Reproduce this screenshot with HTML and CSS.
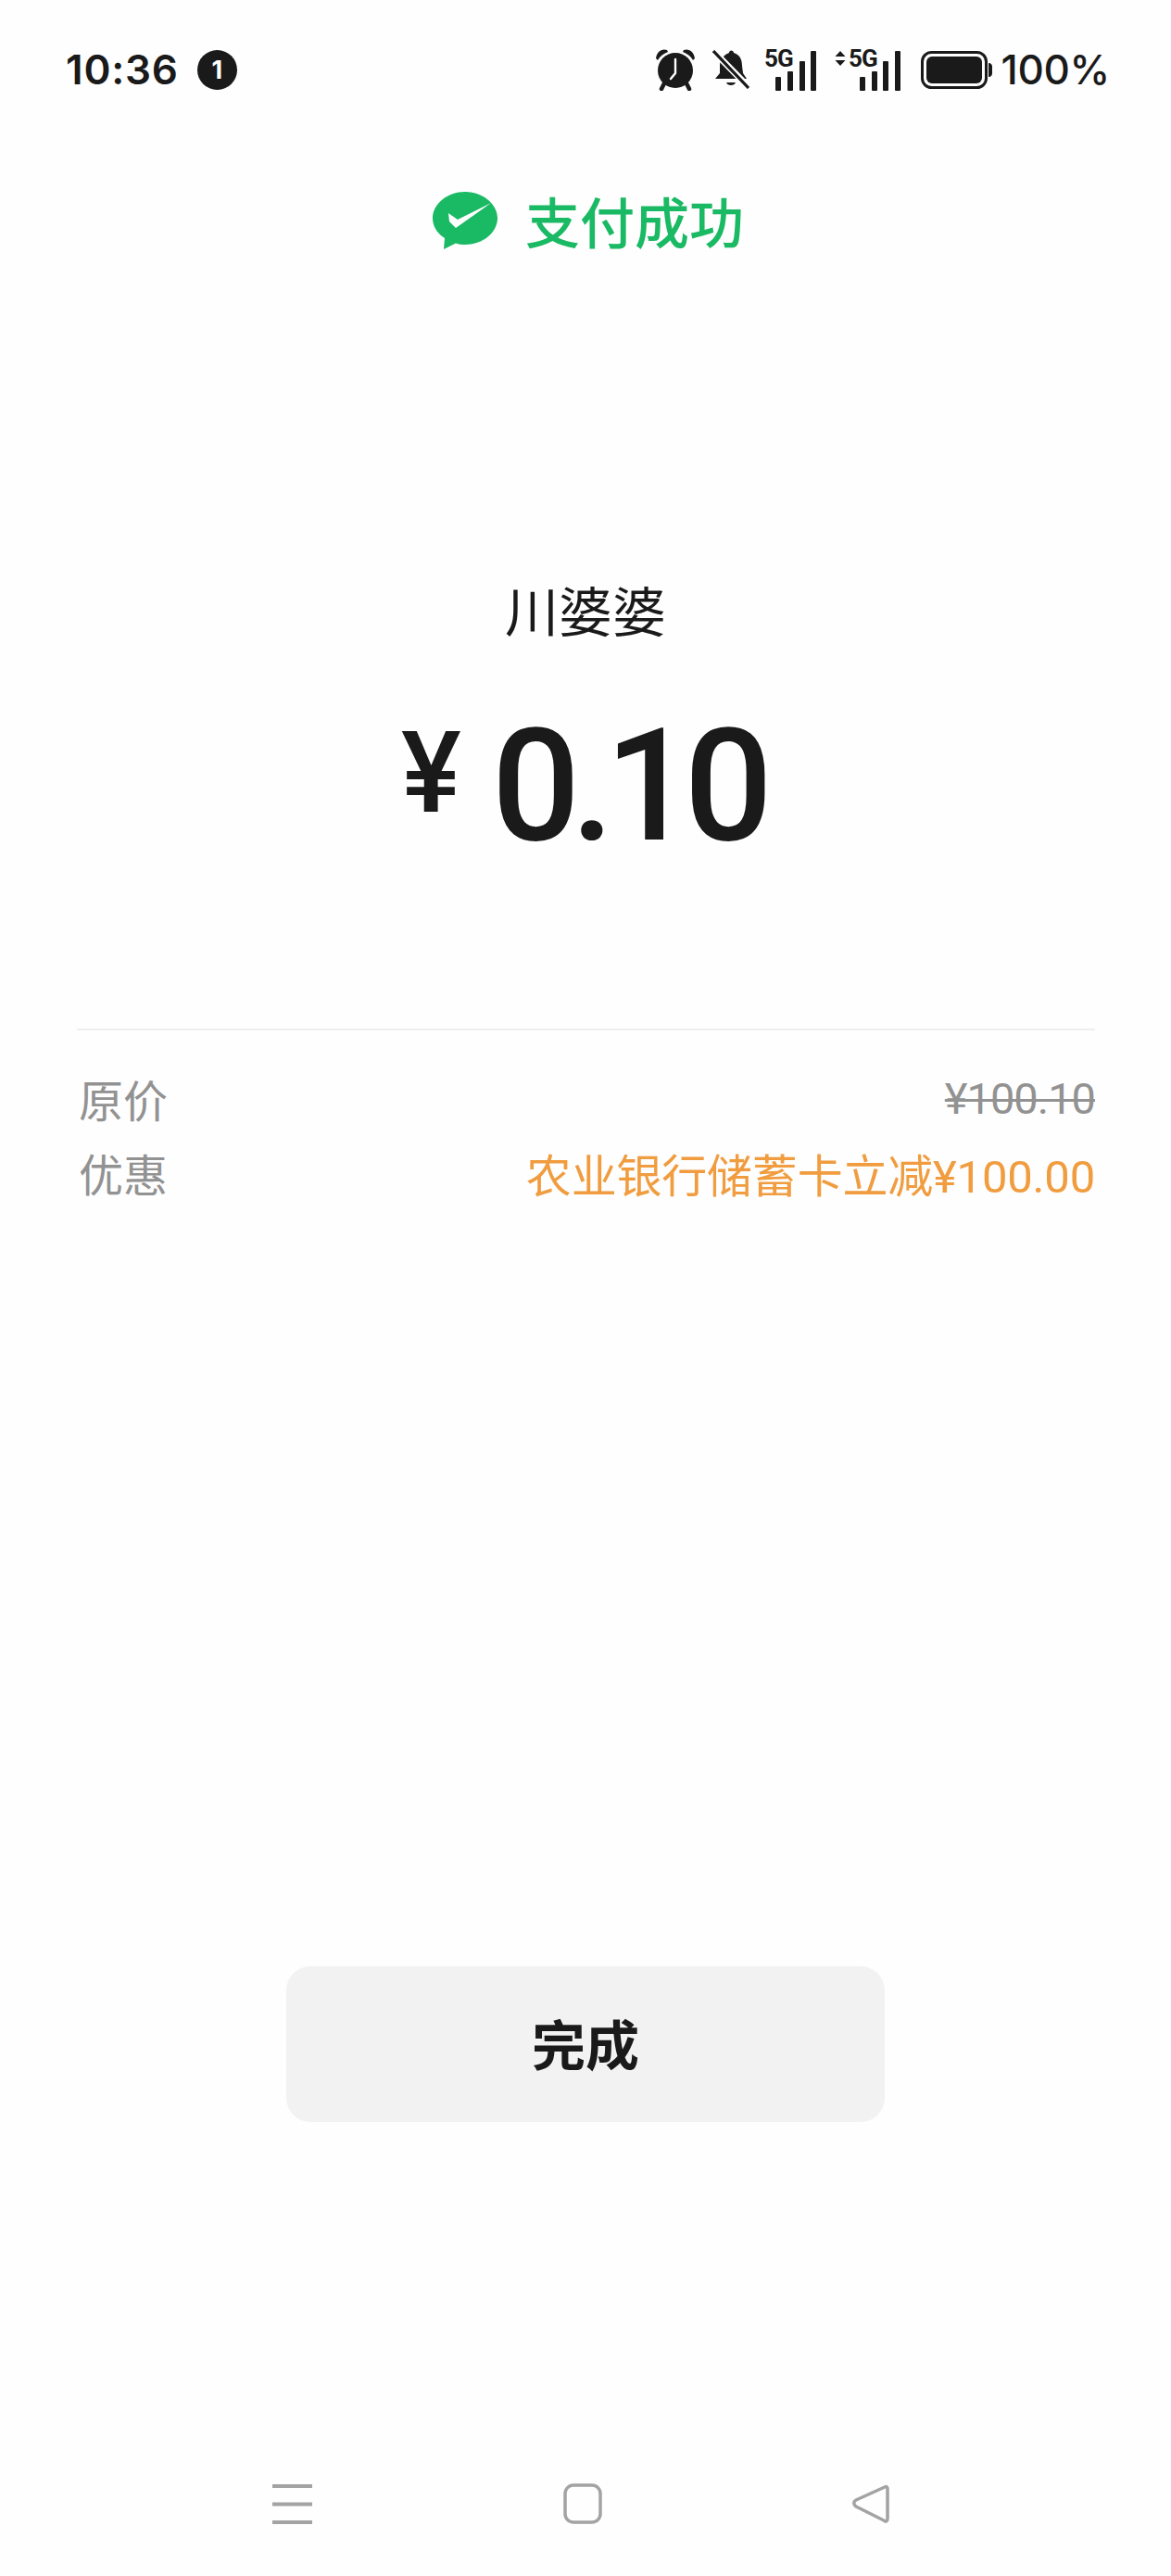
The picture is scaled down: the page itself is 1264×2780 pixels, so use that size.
FILE: index.html
```html
<!DOCTYPE html>
<html lang="zh-CN">
<head>
<meta charset="utf-8">
<title>支付成功</title>
<link rel="stylesheet" href="styles.css">
</head>
<body>
<div class="page">
  <header class="status">
    <div class="status-left">
      <span class="time">10:36</span>
      <span class="badge">1</span>
    </div>
    <div class="status-right">
      <svg class="ic-alarm" viewBox="0 0 44 46">
        <path d="M1 11 C2 4 7 0 13 2 L14 4 C9 6 5 9 3 13 Z M43 11 C42 4 37 0 31 2 L30 4 C35 6 39 9 41 13 Z" fill="#1a1a1a"/>
        <circle cx="22" cy="24" r="19" fill="#1a1a1a"/>
        <path d="M10 38 L7 44 M34 38 L37 44" stroke="#1a1a1a" stroke-width="4.500" stroke-linecap="round"/>
        <path d="M22 12 V27 L17 33" fill="none" stroke="#fff" stroke-width="2.400" stroke-linecap="round" stroke-linejoin="round"/>
      </svg>
      <svg class="ic-bell" viewBox="0 0 40 42">
        <path d="M18 3 a2.500 2.500 0 0 1 5 0 C30 5 32 11 32 17 L33 25 L37 31 H3 L8 25 V17 C8 11 12 5 18 3 Z" fill="#1a1a1a"/>
        <path d="M15 35 H25 C24 39 16 39 15 35 Z" fill="#1a1a1a"/>
        <path d="M-1 -1 L41 42" stroke="#fff" stroke-width="7"/>
        <path d="M1 1 L39 41" stroke="#1a1a1a" stroke-width="3.200"/>
      </svg>
      <svg class="ic-sig" viewBox="0 0 55 45">
        <text x="-1" y="19" class="g5">5G</text>
        <rect x="11" y="30" width="6" height="15" rx="1" fill="#1a1a1a"/>
        <rect x="24" y="24" width="6" height="21" rx="1" fill="#1a1a1a"/>
        <rect x="37" y="13" width="6" height="32" rx="1" fill="#1a1a1a"/>
        <rect x="49" y="2" width="6" height="43" rx="1" fill="#1a1a1a"/>
      </svg>
      <svg class="ic-sig2" viewBox="0 0 71 45">
        <path d="M6 2 L11.500 8 H0.500 Z M6 18 L11.500 12 H0.500 Z" fill="#1a1a1a"/>
        <text x="15" y="19" class="g5">5G</text>
        <rect x="27" y="30" width="6" height="15" rx="1" fill="#1a1a1a"/>
        <rect x="40" y="24" width="6" height="21" rx="1" fill="#1a1a1a"/>
        <rect x="52" y="13" width="6" height="32" rx="1" fill="#1a1a1a"/>
        <rect x="65" y="2" width="6" height="43" rx="1" fill="#1a1a1a"/>
      </svg>
      <svg class="ic-batt" viewBox="0 0 77 41">
        <rect x="1.500" y="1.500" width="69" height="38" rx="10" fill="none" stroke="#1a1a1a" stroke-width="3"/>
        <rect x="6" y="6" width="60" height="29" rx="6" fill="#1a1a1a"/>
        <path d="M73 13 C76 13 77 15 77 17 V24 C77 26 76 28 73 28 Z" fill="#1a1a1a"/>
      </svg>
      <span class="pct">100%</span>
    </div>
  </header>

  <div class="result">
    <svg class="wx" viewBox="0 0 70 62">
      <path d="M35 0 C54 0 70 13 70 28.500 C70 44 54 57 35 57 C31 57 28 56.500 25 55.500 L12 62 L13 50 C5 45 0 37 0 28.500 C0 13 16 0 35 0 Z" fill="#1ab963"/>
      <path d="M17 23 L27 30 L63 12 L25 39 L18 32 Z" fill="#fff"/>
    </svg>
    <span class="result-text">支付成功</span>
  </div>

  <div class="merchant">川婆婆</div>

  <div class="amount">
    <span class="cny">¥</span>
    <span class="num">0.10</span>
  </div>

  <section class="details">
    <div class="row">
      <span class="label">原价</span>
      <span class="strike">¥100.10</span>
    </div>
    <div class="row">
      <span class="label">优惠</span>
      <span class="promo">农业银行储蓄卡立减¥100.00</span>
    </div>
  </section>

  <div class="btn">完成</div>

  <nav class="nav">
    <svg class="nav-ic" viewBox="0 0 44 44">
      <path d="M-3 3 H40 M-3 22.500 H40 M-3 42 H40" stroke="#a3a3a3" stroke-width="4"/>
    </svg>
    <svg class="nav-ic" viewBox="0 0 44 44">
      <rect x="3" y="2" width="38" height="40" rx="9" fill="none" stroke="#a3a3a3" stroke-width="3.500"/>
    </svg>
    <svg class="nav-ic" viewBox="0 0 44 44">
      <path d="M38 4 C40 3 41 4 41 6 V38 C41 41 39 42 37 40 L7 25 C4 23 4 20 7 18 Z" fill="none" stroke="#a3a3a3" stroke-width="3.500" stroke-linejoin="round"/>
    </svg>
  </nav>
</div>
</body>
</html>
```

FILE: styles.css
```css
* { box-sizing: border-box; }
html, body { margin: 0; padding: 0; background: #fff; }
body { font-family: "Noto Sans CJK SC", "Noto Sans", sans-serif; color: #1a1a1a; }
.page { width: 1264px; height: 2780px; display: flex; flex-direction: column; overflow: hidden; background: #fefefe; }

.status { height: 150px; padding: 0 66px 0 71px; display: flex; align-items: center; justify-content: space-between; flex: none; }
.status-left { display: flex; align-items: center; gap: 20px; }
.status-right { display: flex; align-items: center; }
.time, .pct { font-family: Inter, "Liberation Sans", sans-serif; font-size: 44px; font-weight: 600; line-height: 50px; color: #1a1a1a; }
.time { letter-spacing: 0.8px; }
.pct { font-weight: 500; letter-spacing: -0.3px; }
.badge { width: 43px; height: 43px; border-radius: 50%; background: #1a1a1a; color: #fff; font-family: Inter, sans-serif; font-size: 27px; font-weight: 700; display: flex; align-items: center; justify-content: center; }
.ic-alarm { width: 44px; height: 46px; }
.ic-bell { width: 40px; height: 42px; margin-left: 18px; }
.ic-sig { width: 55px; height: 45px; margin-left: 17px; overflow: visible; }
.ic-sig2 { width: 71px; height: 45px; margin-left: 20px; overflow: visible; }
.ic-batt { width: 77px; height: 41px; margin-left: 22px; }
.pct { margin-left: 9px; }
.g5 { font-family: Roboto, sans-serif; font-size: 26px; font-weight: 700; fill: #1a1a1a; letter-spacing: -1px; }

.result { display: flex; align-items: center; justify-content: center; gap: 30px; margin-top: 55px; padding-left: 6px; height: 66px; flex: none; }
.wx { width: 70px; height: 62px; }
.result-text { font-size: 59px; line-height: 66px; color: #1ab963; font-weight: 500; }

.merchant { margin-top: 351px; text-align: center; font-size: 58px; line-height: 70px; color: #1a1a1a; flex: none; }

.amount { margin-top: 72px; padding-right: 7px; display: flex; justify-content: center; align-items: flex-start; height: 173px; flex: none; }
.cny { font-family: Roboto, sans-serif; font-size: 122px; font-weight: 500; line-height: 130px; margin-top: 6px; }
.num { font-family: Roboto, sans-serif; font-size: 168px; font-weight: 500; line-height: 170px; letter-spacing: -10px; margin-left: 33px; }

.details { margin: 173px 82px 0 83px; padding-top: 33px; border-top: 2px solid #eeeeee; flex: none; display: flex; flex-direction: column; }
.row { height: 80px; display: flex; align-items: center; justify-content: space-between; padding: 0 0 0 2px; }
.label { font-size: 48px; line-height: 80px; color: #929292; }
.strike { font-family: Roboto, "Noto Sans CJK SC", sans-serif; font-size: 47px; letter-spacing: -1px; color: #929292; text-decoration: line-through; text-decoration-thickness: 3px; }
.promo { font-family: Roboto, "Noto Sans CJK SC", sans-serif; font-size: 49px; letter-spacing: -0.2px; color: #f09c3f; }

.btn { width: 646px; height: 168px; margin: 817px auto 0; padding-bottom: 4px; border-radius: 26px; background: #f2f2f2; display: flex; align-items: center; justify-content: center; font-size: 58px; font-weight: 700; color: #1a1a1a; flex: none; }

.nav { margin-top: auto; height: 100px; padding: 0 6px 58px 0; display: flex; justify-content: center; gap: 266px; align-items: flex-start; flex: none; }
.nav-ic { width: 44px; height: 44px; overflow: visible; }
```
